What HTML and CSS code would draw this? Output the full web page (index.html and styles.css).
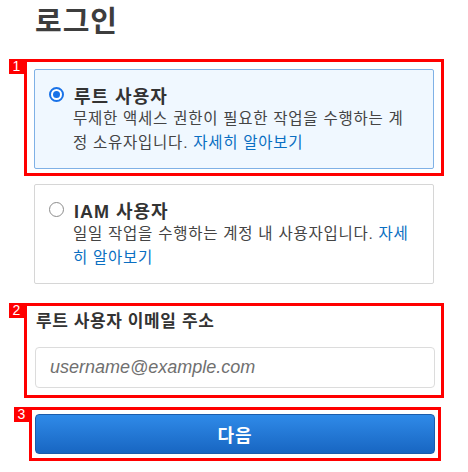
FILE: index.html
```html
<!DOCTYPE html>
<html lang="ko">
<head>
    <meta charset="UTF-8">
    <meta name="viewport" content="width=device-width, initial-scale=1.0">
    <title>로그인</title>
    <link rel="stylesheet" href="styles.css">
</head>
<body>
    <div class="page">
        <h1 class="page-title">로그인</h1>

        <!-- Step 1: account type -->
        <div class="callout callout-wide">
            <span class="callout-num">1</span>
            <label class="choice choice-selected">
                <span class="choice-head">
                    <span class="radio radio-on"></span>
                    <span class="choice-title">루트 사용자</span>
                </span>
                <span class="choice-desc">무제한 액세스 권한이 필요한 작업을 수행하는 계정 소유자입니다. <a href="#">자세히 알아보기</a></span>
            </label>
        </div>

        <label class="choice choice-plain">
            <span class="choice-head">
                <span class="radio"></span>
                <span class="choice-title">IAM 사용자</span>
            </span>
            <span class="choice-desc">일일 작업을 수행하는 계정 내 사용자입니다. <a href="#">자세히 알아보기</a></span>
        </label>

        <!-- Step 2: email -->
        <div class="callout callout-wide callout-email">
            <span class="callout-num">2</span>
            <div class="field-label">루트 사용자 이메일 주소</div>
            <input type="text" class="field-input" placeholder="username@example.com">
        </div>

        <!-- Step 3: submit -->
        <div class="callout callout-btn">
            <span class="callout-num">3</span>
            <button class="next-btn">다음</button>
        </div>
    </div>
</body>
</html>
```

FILE: styles.css
```css
/* General page styling */
body {
    margin: 0;
    background-color: #fff;
    font-family: "Liberation Sans", "Noto Sans CJK KR", sans-serif;
    color: #3b3b3b;
}

.page {
    width: 420px;
    padding: 4px 0 0 24px;
}

.page-title {
    margin: 0 0 0 11px;
    font-size: 29px;
    line-height: 36px;
    letter-spacing: 1px;
    font-weight: bold;
    color: #3d3d3d;
}

/* --- Red numbered callouts --- */
.callout {
    position: relative;
    border: 3px solid #f00;
}

.callout-num {
    position: absolute;
    top: -3px;
    left: -18px;
    width: 15px;
    height: 15px;
    background: #f00;
    color: #fff;
    font-size: 14px;
    line-height: 15px;
    text-align: center;
}

.callout-wide {
    margin-top: 19px;
    padding: 7px 7px 4px 7px;
}

.callout-email {
    padding: 4px 7px 7px 7px;
}

.callout-btn {
    margin: 9px 3px 0 5px;
    padding: 4px 4px 4px 3px;
}

/* --- Radio cards --- */
.choice {
    display: block;
    padding: 13px 15px 13px 14px;
    border: 1px solid #d6d6d6;
    border-radius: 2px;
    background: #fff;
    cursor: pointer;
}

.choice-selected {
    border-color: #7fb1e6;
    background: #f0f8ff;
}

.choice-plain {
    margin: 8px 10px 0 10px;
}

.choice-head {
    display: flex;
    align-items: center;
    gap: 10px;
    height: 24px;
}

.choice-title {
    font-size: 18px;
    letter-spacing: 1px;
    font-weight: bold;
    color: #333;
}

.choice-desc {
    display: block;
    padding: 0 7px 0 24px;
    font-size: 15.5px;
    line-height: 24px;
    letter-spacing: 0.75px;
    color: #444;
}

.choice-desc a {
    color: #0a6fc2;
    text-decoration: none;
}

.radio {
    position: relative;
    width: 13px;
    height: 13px;
    border: 1px solid #8c8c8c;
    border-radius: 50%;
    background: #fff;
    flex: none;
    margin-top: -2px;
}

.radio-on {
    width: 11px;
    height: 11px;
    border: 2px solid #1a73e8;
}

.radio-on::after {
    content: "";
    position: absolute;
    top: 2px;
    left: 2px;
    width: 7px;
    height: 7px;
    border-radius: 50%;
    background: #1a73e8;
}

/* --- Email field --- */
.field-label {
    padding-left: 2px;
    font-size: 17px;
    line-height: 24px;
    letter-spacing: 0.6px;
    font-weight: bold;
    color: #333;
}

.field-input {
    display: block;
    box-sizing: border-box;
    width: 400px;
    height: 41px;
    margin: 13px 0 0 1px;
    padding: 0 14px;
    border: 1px solid #dcdcdc;
    border-radius: 4px;
    font-family: "Liberation Sans", sans-serif;
    font-size: 18px;
    color: #333;
}

.field-input::placeholder {
    font-style: italic;
    color: #707070;
}

/* --- Next button --- */
.next-btn {
    display: block;
    width: 400px;
    height: 40px;
    border: 1px solid #1b5cab;
    border-radius: 4px;
    background: linear-gradient(#2f8ae8, #1866c2);
    color: #fff;
    font-family: "Liberation Sans", "Noto Sans CJK KR", sans-serif;
    font-size: 18px;
    letter-spacing: 1px;
    font-weight: bold;
    cursor: pointer;
}
```
